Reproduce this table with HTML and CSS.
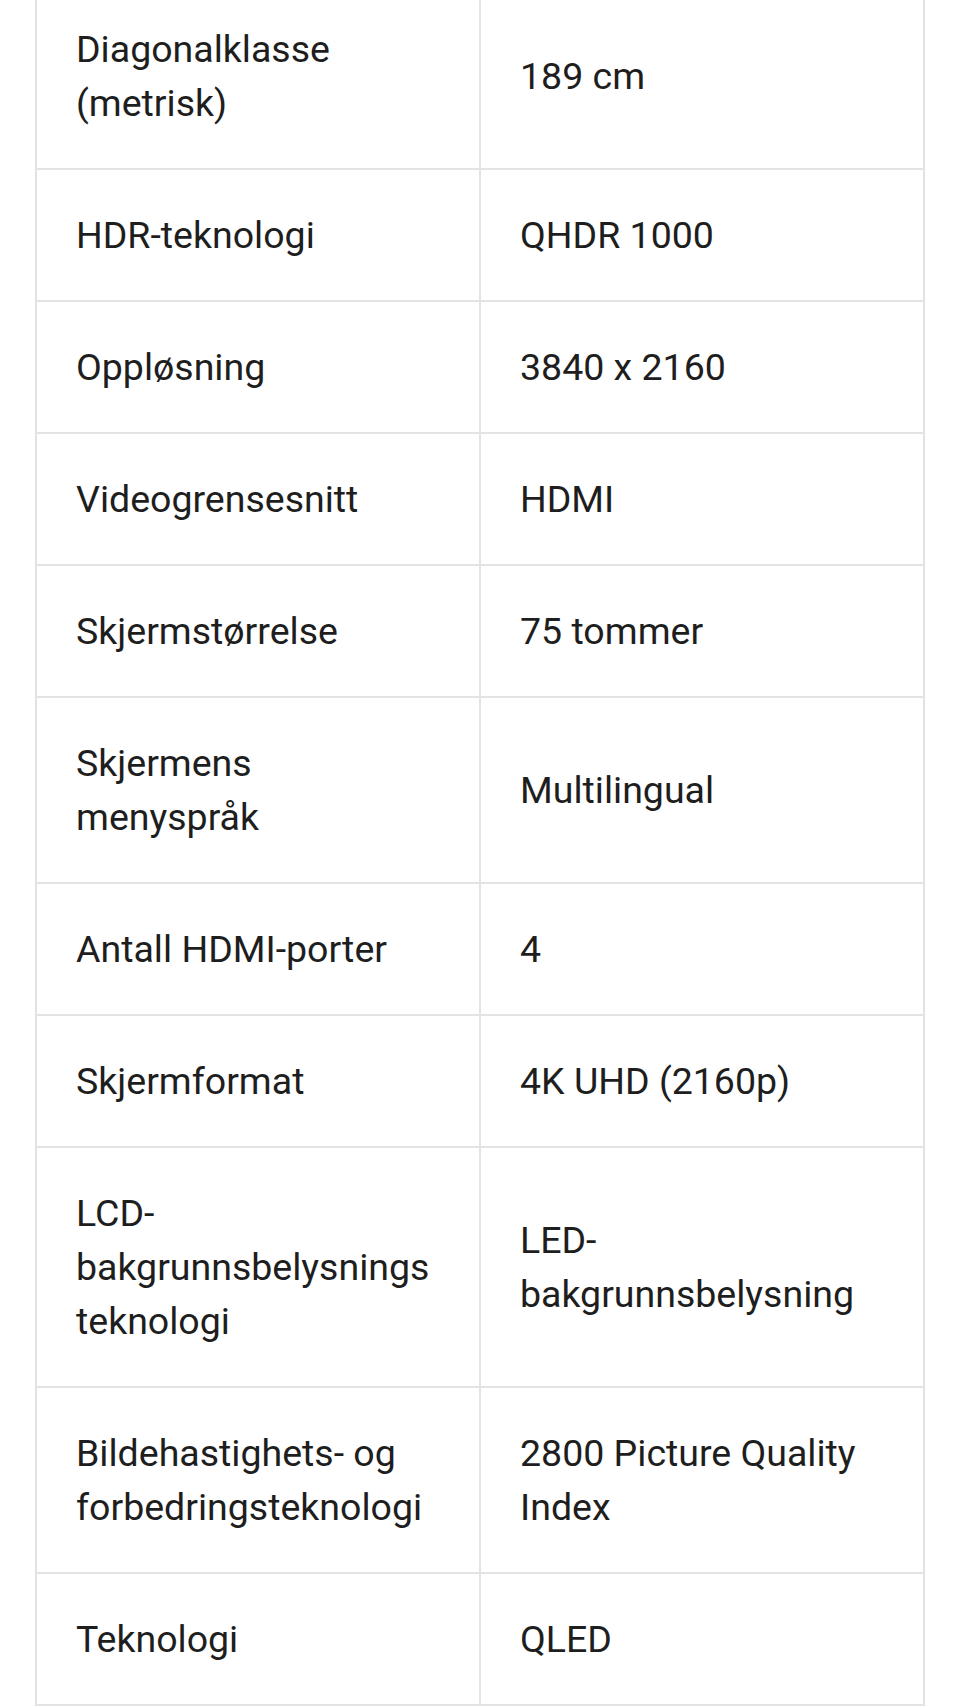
FILE: index.html
```html
<!DOCTYPE html>
<html lang="no">
<head>
<meta charset="utf-8">
<title>Spesifikasjoner</title>
<link rel="stylesheet" href="styles.css">
</head>
<body>
<main class="page">
  <table class="spec-table">
    <tbody>
      <tr><td class="spec-name">Diagonalklasse (metrisk)</td><td class="spec-value">189 cm</td></tr>
      <tr><td class="spec-name">HDR-teknologi</td><td class="spec-value">QHDR 1000</td></tr>
      <tr><td class="spec-name">Oppløsning</td><td class="spec-value">3840 x 2160</td></tr>
      <tr><td class="spec-name">Videogrensesnitt</td><td class="spec-value">HDMI</td></tr>
      <tr><td class="spec-name">Skjermstørrelse</td><td class="spec-value">75 tommer</td></tr>
      <tr><td class="spec-name">Skjermens menyspråk</td><td class="spec-value">Multilingual</td></tr>
      <tr><td class="spec-name">Antall HDMI-porter</td><td class="spec-value">4</td></tr>
      <tr><td class="spec-name">Skjermformat</td><td class="spec-value">4K UHD (2160p)</td></tr>
      <tr><td class="spec-name">LCD-bakgrunnsbelysnings<wbr>teknologi</td><td class="spec-value">LED-bakgrunnsbelysning</td></tr>
      <tr><td class="spec-name">Bildehastighets- og forbedringsteknologi</td><td class="spec-value">2800 Picture Quality Index</td></tr>
      <tr><td class="spec-name">Teknologi</td><td class="spec-value">QLED</td></tr>
    </tbody>
  </table>
</main>
</body>
</html>
```

FILE: styles.css
```css
html, body {
  margin: 0;
  padding: 0;
  background: #ffffff;
}

body {
  font-family: Roboto, "Noto Sans", "Liberation Sans", sans-serif;
  color: #1e1e1e;
  overflow: hidden;
}

.page {
  padding: 0 35px;
}

.spec-table {
  width: 890px;
  margin-top: -18px;
  border-collapse: collapse;
  table-layout: fixed;
  font-size: 37.5px;
  line-height: 54px;
}

.spec-table td {
  border: 2px solid #e3e3e3;
  padding: 38px 42px 38px 39px;
  vertical-align: middle;
  text-align: left;
  width: 50%;
}
```
